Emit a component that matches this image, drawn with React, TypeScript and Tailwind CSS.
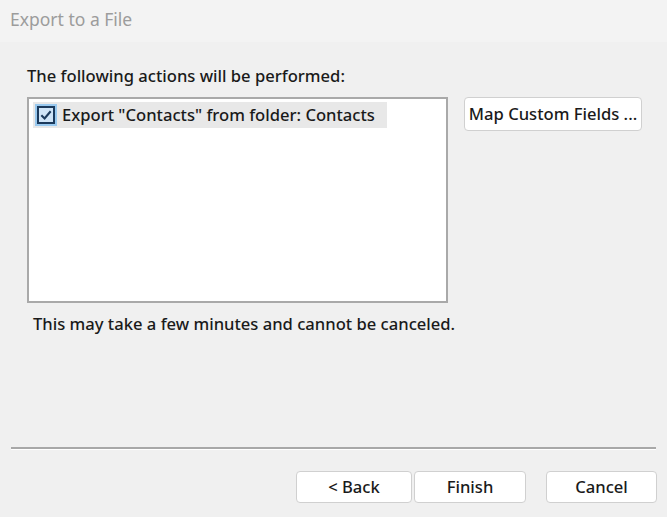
import React from "react";

export default function App() {
  const font = { fontFamily: '"Noto Sans", "Open Sans", sans-serif' };
  return (
    <div className="w-[667px] h-[517px] bg-[#f0f0f0] flex flex-col text-[#1a1a1a]" style={font}>
      <div className="h-[42px] bg-[#f3f3f3] pl-[10px] pt-[7px] text-[17.5px] leading-[24px] text-[#9c9c9c]">Export to a File</div>
      <div className="flex-1 flex flex-col">
        <div className="pl-[27px] pt-[24px] text-[16.6px] leading-[20px] font-medium">The following actions will be performed:</div>
        <div className="flex pl-[27px] mt-[11px]">
          <div className="w-[421px] h-[206px] bg-white border-2 border-[#a9a9a9] pt-[3px] pl-[4px]">
            <div className="w-[354px] h-[26px] bg-[#e8e8e8] flex items-center">
              <div className="w-[22px] h-[22px] bg-[#99c9ef] flex items-center justify-center ml-[2px]">
                <div className="w-[18px] h-[18px] border-2 border-[#1b3a5c] bg-[#cfe4f7] flex items-center justify-center">
                  <svg width="14" height="14" viewBox="0 0 12 12">
                    <path d="M2 6.2 L4.8 9 L10 2.8" fill="none" stroke="#1b3a5c" strokeWidth="1.8" />
                  </svg>
                </div>
              </div>
              <span className="ml-[5px] text-[16.6px] font-medium whitespace-nowrap">Export "Contacts" from folder: Contacts</span>
            </div>
          </div>
          <button className="ml-[16px] w-[178px] h-[34px] bg-white border border-[#d0d0d0] rounded-[4px] text-[16.6px] font-medium whitespace-nowrap">Map Custom Fields ...</button>
        </div>
        <div className="pl-[33px] mt-[11px] text-[16.6px] leading-[20px] font-medium">This may take a few minutes and cannot be canceled.</div>
        <div className="flex-1" />
        <div className="mx-[11px] h-[2px] bg-[#a8a8a8] border-b border-white box-content" />
        <div className="flex justify-end pr-[10px] pt-[21px] pb-[14px]">
          <button className="w-[116px] h-[32px] bg-white border border-[#d0d0d0] rounded-[4px] text-[16.6px] font-medium">&lt; Back</button>
          <button className="ml-[2px] w-[112px] h-[32px] bg-white border border-[#d0d0d0] rounded-[4px] text-[16.6px] font-medium">Finish</button>
          <button className="ml-[20px] w-[111px] h-[32px] bg-white border border-[#d0d0d0] rounded-[4px] text-[16.6px] font-medium">Cancel</button>
        </div>
      </div>
    </div>
  );
}
